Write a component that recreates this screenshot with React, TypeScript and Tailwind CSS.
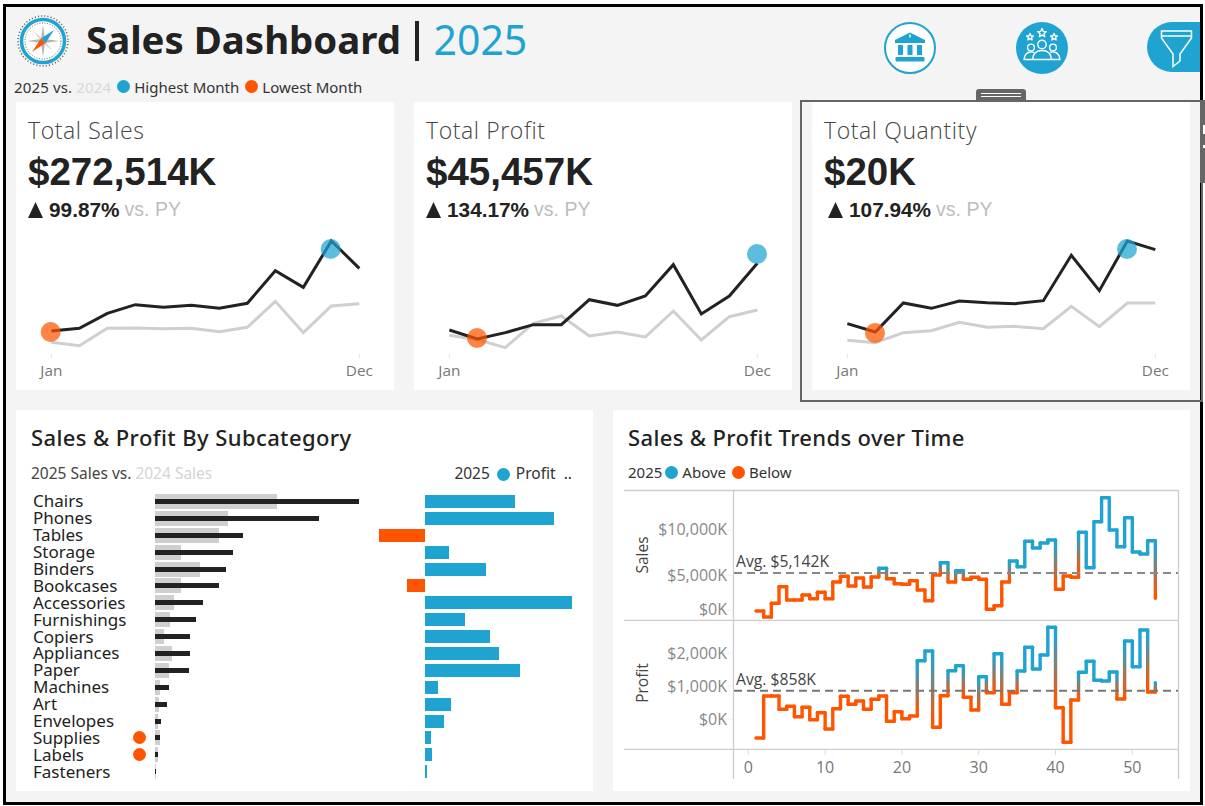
import React from 'react';

const BLUE = '#1fa3d1';
const ORANGE = '#ff5500';

interface Spark {
  title: string;
  value: string;
  delta: string;
  x0: number;
  black: number[];
  gray: number[];
  xs: number[];
  hi: [number, number];
  lo: [number, number];
}

const xsFrom = (a: number) => Array.from({ length: 12 }, (_, i) => a + i * 84);

const sparks: Spark[] = [
  {
    title: 'Total Sales',
    value: '$272,514K',
    delta: '99.87%',
    x0: 18,
    xs: xsFrom(124),
    black: [303, 295, 250, 224, 232, 226, 235, 220, 122, 172, 33, 115],
    gray: [337, 347, 295, 294, 296, 295, 305, 292, 214, 308, 228, 221],
    hi: [962, 57],
    lo: [122, 306],
  },
  {
    title: 'Total Profit',
    value: '$45,457K',
    delta: '134.17%',
    x0: 12,
    xs: xsFrom(118),
    black: [300, 327, 308, 284, 284, 209, 226, 198, 104, 252, 198, 100],
    gray: [316, 329, 353, 280, 258, 318, 306, 321, 243, 330, 260, 240],
    hi: [1041, 72],
    lo: [201, 324],
  },
  {
    title: 'Total Quantity',
    value: '$20K',
    delta: '107.94%',
    x0: 36,
    xs: xsFrom(142),
    black: [281, 306, 219, 235, 213, 218, 221, 212, 76, 182, 33, 59],
    gray: [331, 338, 308, 302, 277, 292, 289, 296, 229, 290, 219, 219],
    hi: [981, 57],
    lo: [225, 309],
  },
];

const subcats: [string, number, number, number, boolean?][] = [
  ['Chairs', 122, 204, 90],
  ['Phones', 73, 164, 129],
  ['Tables', 64, 88, -46],
  ['Storage', 26, 78, 24],
  ['Binders', 45, 71, 61],
  ['Bookcases', 26, 64, -18],
  ['Accessories', 19, 48, 147],
  ['Furnishings', 15, 41, 40],
  ['Copiers', 9, 35, 65],
  ['Appliances', 17, 35, 74],
  ['Paper', 14, 34, 95],
  ['Machines', 5, 14, 13],
  ['Art', 4, 12, 26],
  ['Envelopes', 3, 6, 19],
  ['Supplies', 5, 5, 6, true],
  ['Labels', 3, 3, 7, true],
  ['Fasteners', 1, 1, 2],
];

const salesY = [
  611, 617, 603.3, 586.7, 600, 600, 595, 598.7, 592.3, 598.7, 582, 576.3, 586, 578, 587, 577, 568.3, 578.7, 583.7,
  584.3, 580.7, 590, 600.7, 575, 562.7, 582, 570.7, 579.3, 577.3, 579.3, 609.3, 605.7, 582, 561, 566.7, 541.3, 548,
  543, 540, 589.3, 576, 577.3, 532.3, 567.7, 521.7, 497.7, 530, 546.7, 517.7, 552, 554, 540.7, 598.3,
];

const profitY = [
  738, 696, 696, 709.3, 706.3, 716.7, 707.3, 719.7, 712.7, 729, 708.7, 696.3, 704.3, 701, 709.3, 699.3, 696, 721.3,
  711.7, 718.7, 716, 660.7, 651, 727.3, 695.7, 670.7, 665.7, 697.3, 710, 676.7, 692.7, 653.7, 704.3, 692.7, 671,
  647.3, 669, 655, 627.3, 707.7, 742.3, 700, 672.3, 661.3, 680.3, 681, 672, 699, 641, 666.7, 630, 692, 682.7,
];

const wx = (w: number) => 748.3 + 7.68 * w;

const StepLine = ({ ys, avg, id }: { ys: number[]; avg: number; id: string }) => {
  const col = (y: number) => (y < avg ? BLUE : ORANGE);
  return (
    <g strokeWidth={3.4} strokeLinecap="round" fill="none">
      {ys.map((y, i) => {
        const x1 = wx(i + 1);
        const x2 = wx(i + 2);
        if (i === ys.length - 1) return null;
        const next = ys[i + 1];
        const crosses = col(y) !== col(next);
        const top = Math.min(y, next);
        const bottom = Math.max(y, next);
        return (
          <g key={i}>
            {crosses && (
              <linearGradient id={`${id}${i}`} gradientUnits="userSpaceOnUse" x1={x2} y1={top} x2={x2} y2={bottom}>
                <stop offset="0.1" stopColor={BLUE} />
                <stop offset="0.9" stopColor={ORANGE} />
              </linearGradient>
            )}
            <line x1={x2} y1={y} x2={x2} y2={next} stroke={crosses ? `url(#${id}${i})` : col(y)} />
            <line x1={x1} y1={y} x2={x2} y2={y} stroke={col(y)} />
          </g>
        );
      })}
    </g>
  );
};

const Compass = () => (
  <svg width="52" height="52" viewBox="0 0 52 52" className="shrink-0">
    <circle cx="26" cy="26" r="25" fill="none" stroke="#555" strokeWidth="1.5" strokeDasharray="1 2.2" />
    <circle cx="26" cy="26" r="21.5" fill="#fff" stroke={BLUE} strokeWidth="3.5" />
    <circle cx="26" cy="26" r="18" fill="none" stroke="#666" strokeWidth="1" strokeDasharray="1 1.6" />
    <path d="M26 10 L28 24 L42 26 L28 28 L26 42 L24 28 L10 26 L24 24 Z" fill="#b5b5b5" />
    <path d="M16 16 L26 24 L36 36 L26 28 Z" fill="#d5d5d5" />
    <path d="M37 15 L28.5 28 L24 23.5 Z" fill={BLUE} />
    <path d="M15 37 L24 23.5 L28.5 28 Z" fill={ORANGE} />
  </svg>
);

const BankIcon = () => (
  <svg width="52" height="52" viewBox="0 0 52 52" className="shrink-0">
    <circle cx="26" cy="26" r="25" fill="#fff" stroke={BLUE} strokeWidth="2" />
    <path d="M26 10.5 L41 18 V21 H11 V18 Z" fill={BLUE} />
    <rect x="25.3" y="12.5" width="1.4" height="3" fill="#fff" />
    <rect x="14" y="23" width="5" height="10" fill={BLUE} />
    <rect x="23.5" y="23" width="5" height="10" fill={BLUE} />
    <rect x="33" y="23" width="5" height="10" fill={BLUE} />
    <rect x="11.5" y="35" width="29" height="4.5" rx="1" fill={BLUE} />
  </svg>
);

const Star = ({ cx, cy, r }: { cx: number; cy: number; r: number }) => {
  const pts = Array.from({ length: 10 }, (_, i) => {
    const a = -Math.PI / 2 + (i * Math.PI) / 5;
    const rr = i % 2 ? r * 0.45 : r;
    return `${cx + rr * Math.cos(a)},${cy + rr * Math.sin(a)}`;
  }).join(' ');
  return <polygon points={pts} />;
};

const TeamIcon = () => (
  <svg width="52" height="52" viewBox="0 0 52 52" className="shrink-0">
    <circle cx="26" cy="26" r="26" fill={BLUE} />
    <g fill="none" stroke="#fff" strokeWidth="1.4" strokeLinejoin="round">
      <Star cx={26} cy={11} r={4.6} />
      <Star cx={14} cy={15} r={3.6} />
      <Star cx={38} cy={15} r={3.6} />
      <circle cx="26" cy="22.5" r="4.2" />
      <circle cx="15" cy="25.5" r="3.4" />
      <circle cx="37" cy="25.5" r="3.4" />
      <path d="M16.5 37.5 C17 31 21 28.5 26 28.5 C31 28.5 35 31 35.5 37.5 Z" />
      <path d="M18 30.5 C16 29.8 15 29.8 14 30 C10.5 30.5 8.5 33.5 8 37.5 H16.5" />
      <path d="M34 30.5 C36 29.8 37 29.8 38 30 C41.5 30.5 43.5 33.5 44 37.5 H35.5" />
    </g>
  </svg>
);

const FilterIcon = () => (
  <div className="w-[53px] h-[50px] bg-[#1fa3d1] rounded-l-[25px] shrink-0">
    <svg width="53" height="50" viewBox="0 0 53 50">
      <path
        d="M14.5 9 H44.5 V16 L33 32 V39 L26 44.5 V32 L14.5 16 Z M14.5 14 H44.5"
        fill="none"
        stroke="#fff"
        strokeWidth="1.5"
      />
    </svg>
  </div>
);

const SparkCard = ({ s }: { s: Spark }) => {
  const toPts = (a: number[]) => a.map((y, i) => `${s.xs[i]},${y}`).join(' ');
  return (
    <div className="w-[378px] h-[288px] bg-white flex flex-col">
      <div className="pl-[12px] pt-[13px]">
        <div className="h-[30px] leading-[30px] text-[23px] font-light tracking-[0.6px] text-[#444] font-['Open_Sans',sans-serif]">
          {s.title}
        </div>
        <div className="mt-[5px] h-[44px] leading-[44px] text-[38.5px] font-bold text-[#222] font-['Liberation_Sans',sans-serif]">
          {s.value}
        </div>
        <div
          className={`mt-[4px] h-[24px] flex items-center font-['Liberation_Sans',sans-serif] font-bold ${
            s.x0 === 36 ? 'ml-[4px]' : ''
          }`}
        >
          <svg width="15" height="16" viewBox="0 0 15 16" className="mr-[6px]">
            <path d="M7.5 0 L15 16 H0 Z" fill="#222" />
          </svg>
          <span className="text-[#222] text-[20.8px]">{s.delta}</span>
          <span className="ml-[5px] text-[#bdbdbd] text-[19.5px] font-normal">vs. PY</span>
        </div>
      </div>
      <svg
        width="378"
        height="160"
        viewBox={`${s.x0} 0 1134 480`}
        className="mt-auto block"
        fontFamily="'Open Sans', sans-serif"
      >
        <line x1={s.xs[0]} y1="371" x2={s.xs[0]} y2="383" stroke="#e3e3e3" strokeWidth="3" />
        <line x1={s.xs[11]} y1="371" x2={s.xs[11]} y2="383" stroke="#e3e3e3" strokeWidth="3" />
        <polyline points={toPts(s.gray)} fill="none" stroke="#cfcfcf" strokeWidth="9" />
        <polyline points={toPts(s.black)} fill="none" stroke="#222" strokeWidth="9" />
        <circle cx={s.hi[0]} cy={s.hi[1]} r="30" fill="#1fa3d1" fillOpacity="0.72" />
        <circle cx={s.lo[0]} cy={s.lo[1]} r="30" fill="#ff5500" fillOpacity="0.72" />
        <text x={s.xs[0]} y="437" textAnchor="middle" fontSize="46" fill="#777">
          Jan
        </text>
        <text x={s.xs[11]} y="437" textAnchor="middle" fontSize="46" fill="#777">
          Dec
        </text>
      </svg>
    </div>
  );
};

const Dot = ({ color }: { color: string }) => (
  <span className="inline-block w-[13px] h-[13px] rounded-full shrink-0" style={{ background: color }} />
);

const SubcategoryCard = () => (
  <div className="w-[577px] h-[381px] bg-white font-['Noto_Sans',sans-serif]">
    <div className="pt-[15px] pl-[15px] h-[41px] leading-[24px] text-[22px] font-medium text-[#222] tracking-[0.4px]">
      Sales &amp; Profit By Subcategory
    </div>
    <div className="mt-[13px] h-[20px] pl-[15px] pr-[21px] flex items-center justify-between text-[15.5px]">
      <div className="text-[#444]">
        2025 Sales vs. <span className="text-[#d4d4d4]">2024 Sales</span>
      </div>
      <div className="flex items-center gap-[6px] text-[#333]">
        <span className="mr-[1px]">2025</span>
        <Dot color={BLUE} />
        <span>Profit&nbsp; ..</span>
      </div>
    </div>
    <div className="mt-[9px] flex flex-col pl-[17px]">
      {subcats.map(([name, gray, black, profit, flag]) => (
        <div key={name} className="h-[16.9px] flex items-center">
          <div className="w-[100px] h-[16px] text-[17px] leading-[16px] text-[#222] whitespace-nowrap">{name}</div>
          <div className="w-[22px] flex justify-start">{flag && <Dot color={ORANGE} />}</div>
          <div className="relative w-[224px] h-[15px]">
            <div className="absolute left-0 top-0 h-[15px] bg-[#cfcfcf]" style={{ width: gray }} />
            <div className="absolute left-0 top-[5px] h-[5px] bg-[#222]" style={{ width: black }} />
          </div>
          <div className="w-[46px] flex justify-end">
            {profit < 0 && <div className="h-[13px] bg-[#ff5500]" style={{ width: -profit }} />}
          </div>
          <div>{profit > 0 && <div className="h-[13px] bg-[#1fa3d1]" style={{ width: profit }} />}</div>
        </div>
      ))}
    </div>
  </div>
);

const TrendsCard = () => (
  <div className="w-[577px] h-[381px] bg-white flex flex-col font-['Noto_Sans',sans-serif]">
    <div className="pt-[15px] pl-[15px] h-[41px] leading-[24px] text-[22px] font-medium text-[#222] tracking-[0.35px]">
      Sales &amp; Profit Trends over Time
    </div>
    <div className="mt-[11px] h-[20px] pl-[15px] flex items-center text-[15px] text-[#333]">
      <span className="mr-[3px]">2025</span>
      <Dot color={BLUE} />
      <span className="ml-[4px] mr-[6px]">Above</span>
      <Dot color={ORANGE} />
      <span className="ml-[4px]">Below</span>
    </div>
    <svg
      width="577"
      height="305"
      viewBox="613 486 577 305"
      className="mt-[4px] block"
      fontFamily="'Open Sans', sans-serif"
    >
      <g stroke="#cdcdcd" strokeWidth="1.3">
        <line x1="624" y1="490.5" x2="1178.5" y2="490.5" />
        <line x1="624" y1="620.3" x2="1178.5" y2="620.3" />
        <line x1="624" y1="749.3" x2="1178.5" y2="749.3" />
        <line x1="733.5" y1="490" x2="733.5" y2="779" />
        <line x1="1178.5" y1="490" x2="1178.5" y2="779" />
      </g>
      <g stroke="#eeeeee" strokeWidth="1">
        {[530, 575.7, 610, 653, 686, 719].map(y => (
          <line key={y} x1="728" y1={y} x2="733" y2={y} />
        ))}
      </g>
      <g stroke="#dddddd" strokeWidth="1">
        {[0, 10, 20, 30, 40, 50].map(w => (
          <line key={w} x1={wx(w)} y1="750" x2={wx(w)} y2="755" />
        ))}
      </g>
      <StepLine ys={salesY} avg={573} id="s" />
      <StepLine ys={profitY} avg={690.7} id="p" />
      <line x1="734" y1="573" x2="1178" y2="573" stroke="#888" strokeWidth="2" strokeDasharray="8 5" />
      <line x1="734" y1="690.7" x2="1178" y2="690.7" stroke="#777" strokeWidth="2" strokeDasharray="8 5" />
      <g fontSize="16" fill="#888" textAnchor="end">
        <text x="727" y="535">$10,000K</text>
        <text x="727" y="581">$5,000K</text>
        <text x="727" y="615">$0K</text>
        <text x="727" y="659">$2,000K</text>
        <text x="727" y="692">$1,000K</text>
        <text x="727" y="725">$0K</text>
      </g>
      <g fontSize="15.7" fill="#444">
        <text x="736" y="567">Avg. $5,142K</text>
        <text x="736" y="685">Avg. $858K</text>
      </g>
      <g fontSize="15.5" fill="#444" textAnchor="middle">
        <text transform="translate(648 555) rotate(-90)">Sales</text>
        <text transform="translate(648 683) rotate(-90)">Profit</text>
      </g>
      <g fontSize="16" fill="#777" textAnchor="middle">
        {[0, 10, 20, 30, 40, 50].map(w => (
          <text key={w} x={wx(w)} y="773">
            {w}
          </text>
        ))}
      </g>
    </svg>
  </div>
);

export default function App() {
  return (
    <div className="relative w-[1205px] h-[806px] bg-white overflow-hidden pt-[4px] pl-[3px]">
      <div className="w-[1200px] h-[801px] border-[3px] border-black bg-[#f4f4f4] overflow-hidden">
        <div className="h-[66px] pt-[7px] flex items-start font-['Noto_Sans',sans-serif]">
          <div className="ml-[11px] mt-[1px]">
            <Compass />
          </div>
          <div className="ml-[17px] -mt-[1px] h-[52px] flex items-center leading-[52px] whitespace-nowrap">
            <span className="font-bold text-[#222] text-[38.4px]">Sales Dashboard</span>
            <span className="ml-[14px] mt-[3px] w-[3.5px] h-[40px] bg-[#222]" />
            <span className="ml-[15px] text-[#1fa3d1] text-[41px]">2025</span>
          </div>
          <div className="ml-auto mt-[8px] flex items-start">
            <BankIcon />
            <div className="ml-[80px]">
              <TeamIcon />
            </div>
            <div className="ml-[79px]">
              <FilterIcon />
            </div>
          </div>
        </div>
        <div className="h-[29px] pl-[8px] pb-[1px] flex items-center text-[15px] text-[#333] font-['Noto_Sans',sans-serif]">
          <span className="tracking-[0.15px]">
            2025 vs. <span className="text-[#d8d8d8]">2024</span>
          </span>
          <span className="ml-[6px]">
            <Dot color={BLUE} />
          </span>
          <span className="ml-[4px]">Highest Month</span>
          <span className="ml-[6px]">
            <Dot color={ORANGE} />
          </span>
          <span className="ml-[4px]">Lowest Month</span>
        </div>
        <div className="pl-[10px] flex gap-[20px]">
          {sparks.map(s => (
            <SparkCard key={s.title} s={s} />
          ))}
        </div>
        <div className="mt-[20px] pl-[10px] flex gap-[20px]">
          <SubcategoryCard />
          <TrendsCard />
        </div>
      </div>

      {/* selected zone outline and its drag handles, on top of the dashboard */}
      <div className="absolute left-[800px] top-[100px] w-[403px] h-[302px] border-2 border-[#666] pointer-events-none" />
      <div className="absolute left-[976px] top-[89px] w-[50px] h-[12px] bg-[#666] rounded-t-[3px] flex flex-col items-center justify-center gap-[2px]">
        <div className="w-[40px] h-[1px] bg-white" />
        <div className="w-[40px] h-[1px] bg-white" />
      </div>
      <div className="absolute left-[1200px] top-[100px] w-[5px] h-[83px] bg-[#666]">
        <div className="absolute right-0 top-[25px] w-[2px] h-[9px] bg-white" />
        <div className="absolute right-0 top-[45px] w-[2px] h-[3px] bg-white" />
      </div>
    </div>
  );
}
